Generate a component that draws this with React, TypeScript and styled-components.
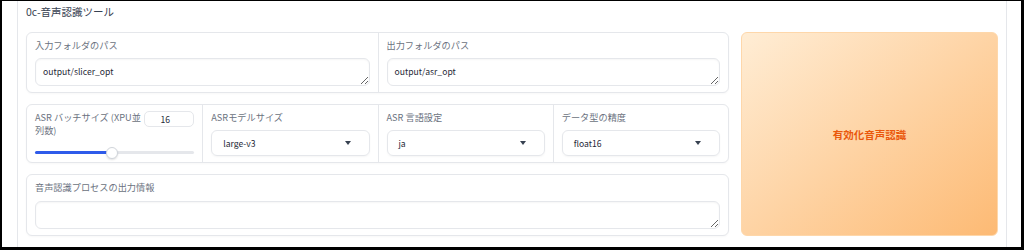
import React from 'react'
import styled, { createGlobalStyle } from 'styled-components'

const GlobalStyle = createGlobalStyle`
  html, body {
    margin: 0;
    padding: 0;
    background: #ffffff;
  }
  body {
    font-family: "Noto Sans CJK JP", "Noto Sans", sans-serif;
    color: #374151;
  }
`

const SFrame = styled.div`
  box-sizing: border-box;
  width: 1024px;
  height: 250px;
  border-style: solid;
  border-color: #000;
  border-width: 1px 3px 3px 2px;
  padding-left: 15px;
  background: #fff;
  overflow: hidden;
`

const SPanel = styled.div`
  box-sizing: border-box;
  width: 990px;
  height: 100%;
  padding: 4px 8px 0;
  border-left: 1px solid #e5e7eb;
  border-right: 1px solid #e5e7eb;
`

const STitle = styled.div`
  font-size: 10.5px;
  line-height: 16px;
  color: #374151;
  margin: -1px 0 12px 0;
`

const SBody = styled.div`
  display: flex;
  gap: 12px;
  align-items: stretch;
`

const SLeft = styled.div`
  width: 703px;
  display: flex;
  flex-direction: column;
  gap: 11px;
`

const SRow = styled.div<{ $cols: number }>`
  display: grid;
  grid-template-columns: repeat(${(p) => p.$cols}, 1fr);
  border: 1px solid #e5e7eb;
  border-radius: 6px;
  background: #fff;
  box-shadow: 0 1px 2px rgba(0, 0, 0, 0.03);
`

const SCell = styled.div<{ $gap?: number }>`
  display: flex;
  flex-direction: column;
  gap: ${(p) => p.$gap ?? 6}px;
  padding: 6px 8px;
  min-width: 0;

  & + & {
    border-left: 1px solid #e5e7eb;
  }
`

const SLabel = styled.div`
  font-size: 9.2px;
  line-height: 13px;
  color: #6b7280;
`

const STextArea = styled.textarea`
  box-sizing: border-box;
  width: 100%;
  height: 28px;
  padding: 5px 7px;
  font-family: inherit;
  font-size: 8.6px;
  line-height: 14px;
  color: #1f2937;
  border: 1px solid #e5e7eb;
  border-radius: 6px;
  box-shadow: 0 1px 2px rgba(0, 0, 0, 0.04) inset;
  outline: none;
  resize: vertical;
  display: block;
`

const SSliderHead = styled.div`
  display: flex;
  align-items: flex-start;
  gap: 1px;
`

const SNumber = styled.div`
  box-sizing: border-box;
  width: 50px;
  height: 16px;
  flex: none;
  padding-right: 8px;
  border: 1px solid #e5e7eb;
  border-radius: 5px;
  font-size: 8.6px;
  line-height: 14px;
  text-align: center;
  color: #1f2937;
`

const STrack = styled.div`
  position: relative;
  height: 3px;
  margin: 14px 0 0;
  background: #e5e7eb;
  border-radius: 2px;
`

const SFill = styled.div`
  height: 100%;
  background: #2f5bea;
  border-radius: 2px;
`

const SThumb = styled.div`
  position: absolute;
  top: 50%;
  width: 12px;
  height: 12px;
  margin: -6px 0 0 -6px;
  box-sizing: border-box;
  border-radius: 50%;
  background: #fff;
  border: 1px solid #d1d5db;
  box-shadow: 0 1px 2px rgba(0, 0, 0, 0.12);
`

const SSelect = styled.div`
  box-sizing: border-box;
  height: 26px;
  display: flex;
  align-items: center;
  justify-content: space-between;
  padding: 0 18px 0 11px;
  border: 1px solid #e5e7eb;
  border-radius: 6px;
  box-shadow: 0 1px 2px rgba(0, 0, 0, 0.04);
  font-size: 8.6px;
  color: #1f2937;
`

const SCaret = styled.span`
  width: 0;
  height: 0;
  border-left: 3.5px solid transparent;
  border-right: 3.5px solid transparent;
  border-top: 4px solid #374151;
`

const SButton = styled.button`
  flex: 1;
  border: 1px solid #fed7aa;
  border-radius: 6px;
  background: linear-gradient(to bottom right, #ffedd5, #fdba74);
  color: #ea580c;
  font-family: inherit;
  font-size: 10.5px;
  font-weight: 700;
  cursor: pointer;
`

const Field = ({ label, value }: { label: string; value: string }) => (
  <SCell>
    <SLabel>{label}</SLabel>
    <STextArea readOnly value={value} rows={1} />
  </SCell>
)

const Select = ({ label, value }: { label: string; value: string }) => (
  <SCell>
    <SLabel>{label}</SLabel>
    <SSelect>
      <span>{value}</span>
      <SCaret />
    </SSelect>
  </SCell>
)

const batch = { value: 16, min: 1, max: 32 }

export default function App() {
  const pct = ((batch.value - batch.min) / (batch.max - batch.min)) * 100
  return (
    <SFrame>
      <GlobalStyle />
      <SPanel>
        <STitle>0c-音声認識ツール</STitle>
        <SBody>
          <SLeft>
            <SRow $cols={2}>
              <Field label="入力フォルダのパス" value="output/slicer_opt" />
              <Field label="出力フォルダのパス" value="output/asr_opt" />
            </SRow>
            <SRow $cols={4}>
              <SCell $gap={0}>
                <SSliderHead>
                  <SLabel>ASR バッチサイズ (XPU並列数)</SLabel>
                  <SNumber>{batch.value}</SNumber>
                </SSliderHead>
                <STrack>
                  <SFill style={{ width: `${pct}%` }} />
                  <SThumb style={{ left: `${pct}%` }} />
                </STrack>
              </SCell>
              <Select label="ASRモデルサイズ" value="large-v3" />
              <Select label="ASR 言語設定" value="ja" />
              <Select label="データ型の精度" value="float16" />
            </SRow>
            <SRow $cols={1}>
              <SCell $gap={7}>
                <SLabel>音声認識プロセスの出力情報</SLabel>
                <STextArea readOnly value="" rows={1} />
              </SCell>
            </SRow>
          </SLeft>
          <SButton>有効化音声認識</SButton>
        </SBody>
      </SPanel>
    </SFrame>
  )
}
